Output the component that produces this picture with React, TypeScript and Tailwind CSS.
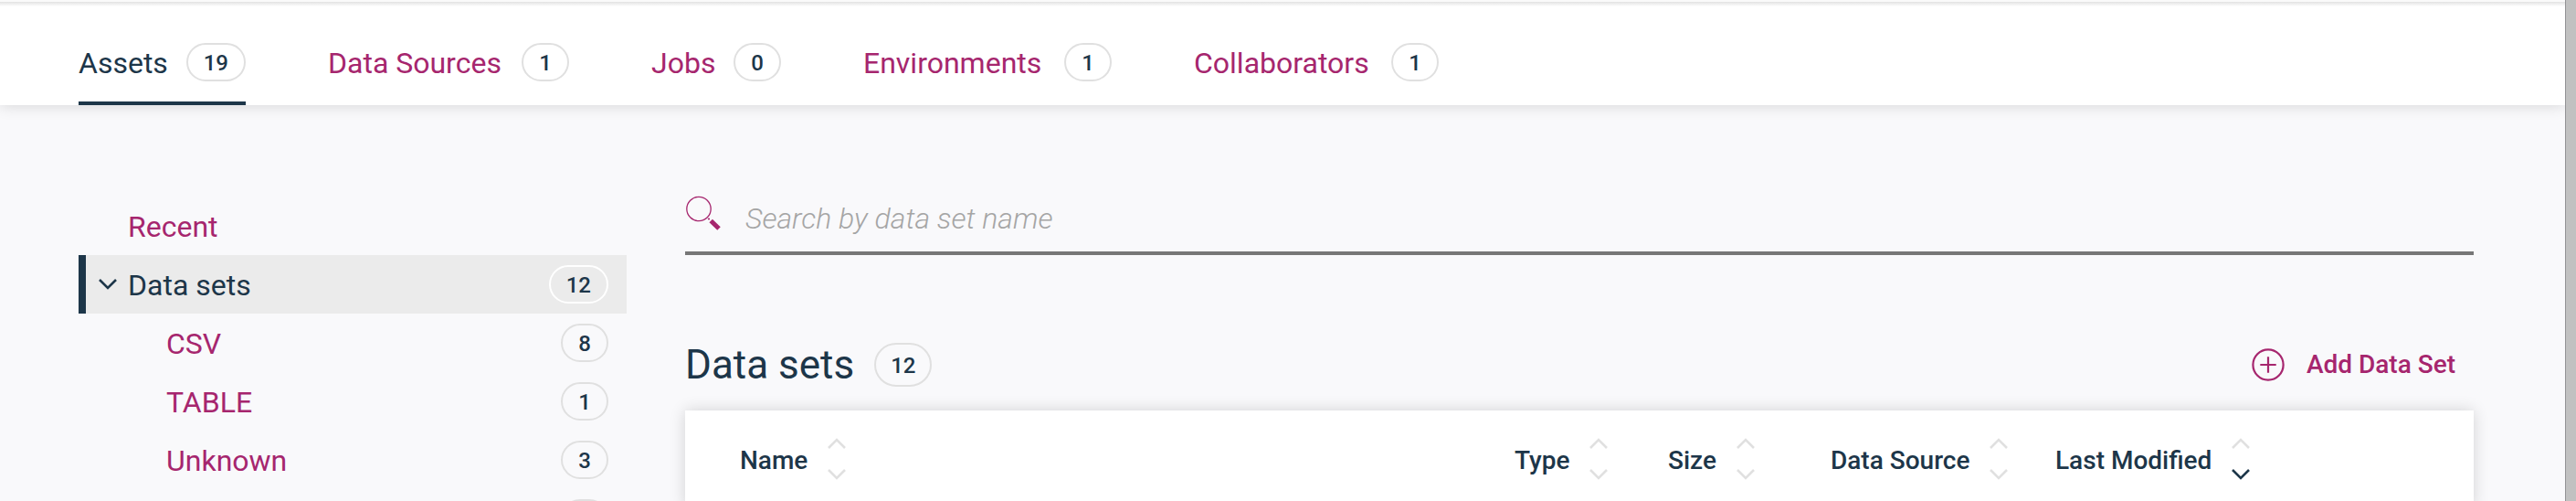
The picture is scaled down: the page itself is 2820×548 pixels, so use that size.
import React from "react";

type Tab = { label: string; count: number; width: string };

const tabs: Tab[] = [
  { label: "Assets", count: 19, width: "min-w-[183px]" },
  { label: "Data Sources", count: 1, width: "min-w-[264px]" },
  { label: "Jobs", count: 0, width: "min-w-[142px]" },
  { label: "Environments", count: 1, width: "min-w-[272px]" },
  { label: "Collaborators", count: 1, width: "min-w-[268px]" },
];

const categories = [
  { label: "CSV", count: "8" },
  { label: "TABLE", count: "1" },
  { label: "Unknown", count: "3" },
  { label: "", count: "" },
];

const columns = [
  { label: "Name", width: "pl-[60px]", sorted: false },
  { label: "Type", width: "w-[168px]", sorted: false },
  { label: "Size", width: "w-[178px]", sorted: false },
  { label: "Data Source", width: "w-[246px]", sorted: false },
  { label: "Last Modified", width: "w-[458px]", sorted: true },
];

function Badge({ children, light, large }: { children: React.ReactNode; light?: boolean; large?: boolean }) {
  return (
    <span
      className={`inline-flex shrink-0 items-center justify-center rounded-full border-2 pt-0.5 text-[24px] leading-none font-medium text-[#1d3649] ${
        large ? "h-12 min-w-[62px] px-4" : "h-[42px] min-w-[52px] px-[17px]"
      } ${light ? "border-white" : "border-[#e0e0e0]"}`}
    >
      {children}
    </span>
  );
}

function SortIcon({ sorted }: { sorted: boolean }) {
  return (
    <svg width="20" height="46" viewBox="0 0 20 46" fill="none" strokeWidth="2.6" aria-hidden="true">
      <path d="M1 11 L10 2 L19 11" stroke="#e0e0e0" />
      <path d="M1 35 L10 44 L19 35" stroke={sorted ? "#1d3649" : "#e0e0e0"} />
    </svg>
  );
}

export default function App() {
  return (
    <div className="flex h-screen overflow-hidden bg-[#f9f9fb] font-['Roboto',sans-serif] text-[32px] leading-10 text-[#1d3649]">
      <div className="flex min-w-0 grow flex-col">
        <header className="h-[115px] shrink-0 border-t-2 border-[#fafafa] bg-white bg-linear-to-b from-[#e2e2e2] to-white to-[5px] px-[86px] shadow-[0_0_16px_rgba(0,0,0,0.16)]">
          <nav aria-label="Project sections" className="flex h-full gap-[90px]">
            {tabs.map((tab, i) => (
              <a
                key={tab.label}
                href="#"
                aria-current={i === 0 ? "page" : undefined}
                className={`flex h-full items-center justify-between border-b-4 pt-[22px] whitespace-nowrap ${tab.width} ${
                  i === 0 ? "border-[#1d3649]" : "border-transparent text-[#a6266e]"
                }`}
              >
                <span className="pt-0.5">{tab.label}</span>
                <Badge>{tab.count}</Badge>
              </a>
            ))}
          </nav>
        </header>

        <div className="flex grow gap-16 pr-[100px] pl-[86px]">
          <nav aria-label="Asset types" className="w-[600px] shrink-0 pt-[100px]">
            <a href="#" className="flex h-16 items-center pl-[54px] pt-0.5 text-[#a6266e]">
              Recent
            </a>
            <button
              type="button"
              aria-expanded="true"
              className="flex h-16 w-full items-center border-l-8 border-[#1d3649] bg-[#ebebeb] pr-5 pl-[14px] text-left"
            >
              <svg width="20" height="12" viewBox="0 0 20 12" fill="none" stroke="#1d3649" strokeWidth="2.6" aria-hidden="true">
                <path d="M1 1 L10 10 L19 1" />
              </svg>
              <span className="grow pt-0.5 pl-3">Data sets</span>
              <Badge light>12</Badge>
            </button>
            <ul>
              {categories.map((c, i) => (
                <li key={i}>
                  <a href="#" className="flex h-16 items-center justify-between pr-5 pl-24 text-[#a6266e]">
                    <span className="pt-0.5">{c.label}</span>
                    <Badge>{c.count}</Badge>
                  </a>
                </li>
              ))}
            </ul>
          </nav>

          <main className="min-w-0 grow pt-[88px]">
            <label className="flex h-[76px] items-center border-b-4 border-[#777777]">
              <svg width="40" height="40" viewBox="0 0 40 40" fill="none" className="-mt-3 shrink-0" aria-hidden="true">
                <circle cx="15" cy="15.5" r="13.2" stroke="#a6266e" strokeWidth="1.3" />
                <circle cx="26" cy="26.5" r="1.1" fill="#a6266e" />
                <path d="M28.2 28.5 L37 37" stroke="#a6266e" strokeWidth="5" />
              </svg>
              <input
                type="text"
                aria-label="Search by data set name"
                placeholder="Search by data set name"
                className="min-w-0 grow bg-transparent pl-[26px] font-light italic outline-none placeholder:text-[#a5a5a5]"
              />
            </label>

            <div className="mt-24 flex h-12 items-center justify-between pr-5">
              <h1 className="flex items-center gap-[22px] text-[44px] leading-12">
                Data sets
                <Badge large>12</Badge>
              </h1>
              <button type="button" className="flex items-center gap-6 text-[28px] font-medium text-[#a6266e]">
                <svg width="36" height="36" viewBox="0 0 36 36" fill="none" stroke="#a6266e" strokeWidth="2.2" aria-hidden="true">
                  <circle cx="18" cy="18" r="16.6" />
                  <path d="M9.3 18 H26.7 M18 9.3 V26.7" />
                </svg>
                Add Data Set
              </button>
            </div>

            <div className="mt-[26px] bg-white shadow-[0_0_16px_rgba(0,0,0,0.16)]">
              <table className="w-full table-fixed text-left text-[28px]">
                <thead>
                  <tr className="h-[106px]">
                    {columns.map((c) => (
                      <th key={c.label} scope="col" className={`p-0 font-medium ${c.width}`}>
                        <button type="button" className="flex items-center gap-[22px] whitespace-nowrap">
                          <span className="pt-1">{c.label}</span>
                          <SortIcon sorted={c.sorted} />
                        </button>
                      </th>
                    ))}
                  </tr>
                </thead>
              </table>
            </div>
          </main>
        </div>
      </div>
      <div className="relative w-3 shrink-0 border-l border-[#939395] bg-[#c1c1c1]" />
    </div>
  );
}
